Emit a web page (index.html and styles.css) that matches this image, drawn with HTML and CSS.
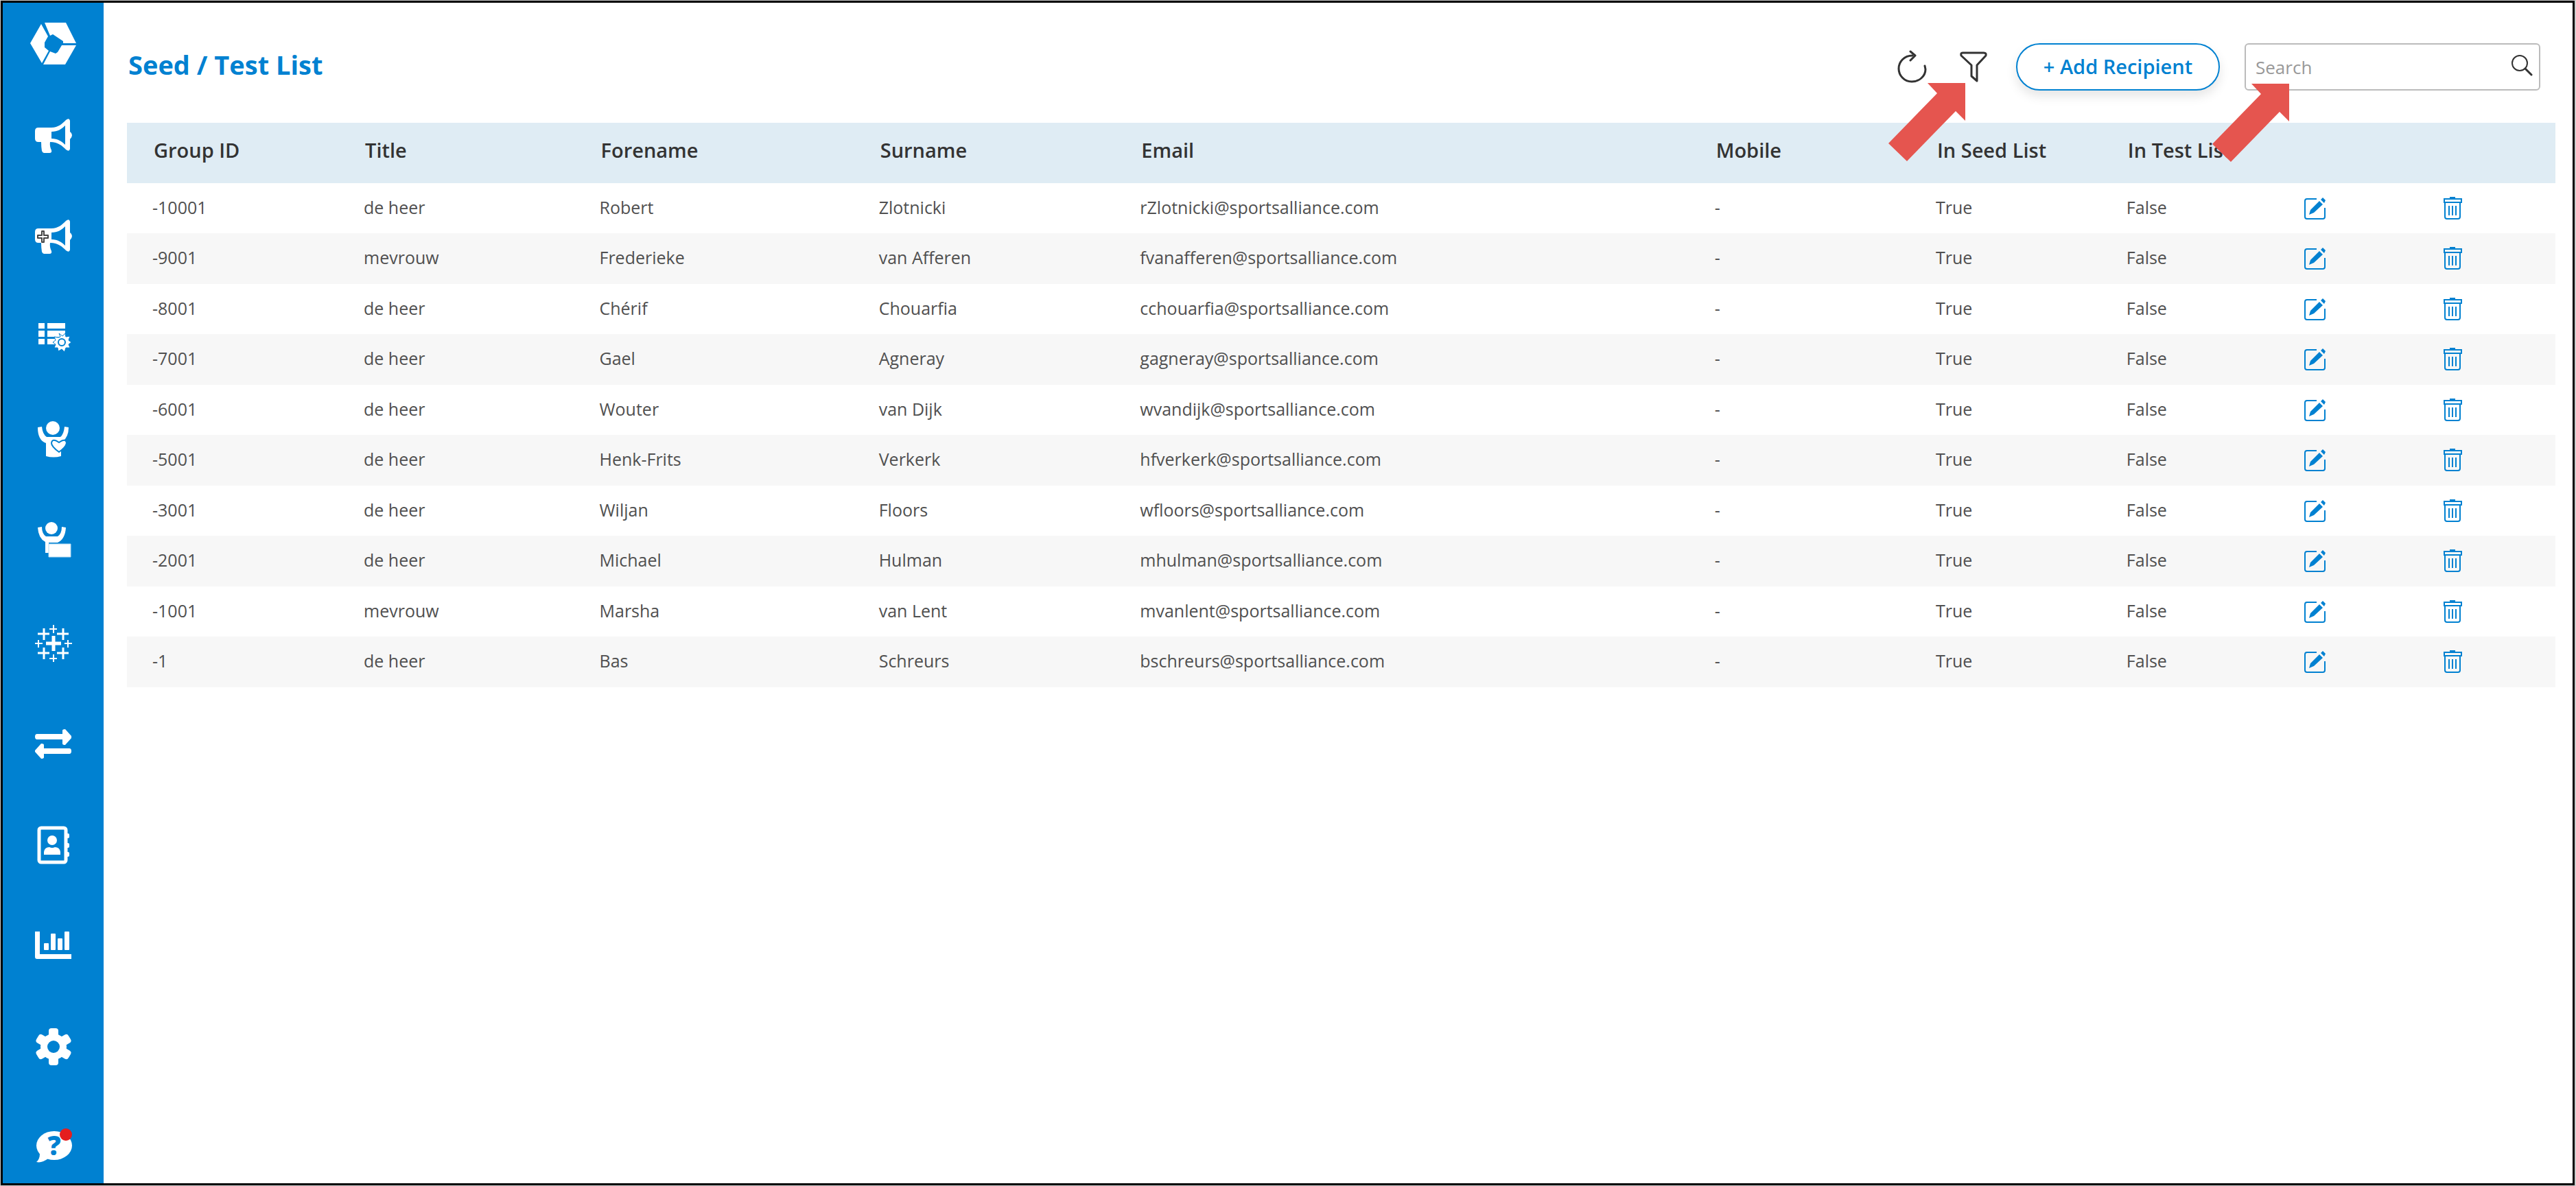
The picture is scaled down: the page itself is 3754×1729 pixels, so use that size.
FILE: index.html
```html
<!DOCTYPE html>
<html lang="en">
  <head>
    <meta charset="UTF-8" />
    <meta name="viewport" content="width=device-width, initial-scale=1.0" />
    <link rel="stylesheet" href="styles.css">
    <title>Seed / Test List</title>
  </head>
  <body>
    <!-- shared icons -->
    <svg class="sprite" aria-hidden="true">
      <symbol id="megaphone" viewBox="0 0 64 64">
        <path fill-rule="evenodd" d="M10 20H29C39 20 45 14 50 9Q55 5 56 10V26Q59 28 59 31T56 37V51Q55 56 50 52C45 47 39 41 27 41Q26 47 29 53Q30 57 26 57H18Q16 57 15 54Q14 48 14 41H10Q5 41 5 36V25Q5 20 10 20ZM29 26V36C38 36 44 40 49 45V17C44 22 38 26 29 26Z" />
      </symbol>
      <symbol id="edit" viewBox="0 0 34 34">
        <path d="M19 3H5Q2 3 2 6V29Q2 32 5 32H28Q31 32 31 29V16" fill="none" stroke="currentColor" stroke-width="2" />
        <path d="M8 26L10 19L23 6L28 11L15 23ZM25 4L28 1L32 5L30 9Z" />
      </symbol>
      <symbol id="trash" viewBox="0 0 34 34">
        <path d="M3 3H28V8H3ZM4 8V29Q4 32 7 32H23Q26 32 26 29V8" fill="none" stroke="currentColor" stroke-width="2" />
        <path d="M10 13V27M15 13V27M20 13V27" stroke="currentColor" stroke-width="2" />
        <path d="M11 0H19V3H11Z" />
      </symbol>
    </svg>

    <div class="app">
      <aside class="sidebar">
        <a class="logo" href="#" aria-label="Home">
          <svg viewBox="0 0 72 72">
            <path d="M23 5H54L69 35H50V32L35 22L31 24Z" />
            <path d="M18 7L28 25L23 34V41L29 46L19 64L2 35Z" />
            <path d="M69 38L53 66H21L31 47L39 50L42 48L48 38Z" />
          </svg>
        </a>
        <nav class="menu">
          <a href="#" aria-label="Campaigns"><svg viewBox="0 0 64 64"><use href="#megaphone" /></svg></a>
          <a href="#" aria-label="New campaign">
            <svg viewBox="0 0 64 64">
              <use href="#megaphone" />
              <path d="M15 24H18V30H24V34H18V40H15V34H9V30H15Z" fill="#fff" stroke="#444" stroke-width="2" stroke-linejoin="round" />
            </svg>
          </a>
          <a href="#" aria-label="Lists">
            <svg viewBox="0 0 64 64">
              <path d="M10 11H19V19H10ZM10 22H19V31H10ZM10 34H19V42H10ZM23 11H49V19H23ZM23 22H49V31H23ZM23 34H42V42H23Z" />
              <g stroke="#0081d1" stroke-width="1">
                <path d="M42 31L40 26L45 30L49 26L50 31L56 30L54 36L58 39L54 42L56 47L50 47L48 53L44 49L39 52L38 47L33 47L35 42L31 39L35 36L33 31L39 32Z" />
                <circle cx="44" cy="39" r="5" fill="none" stroke-width="2" />
              </g>
            </svg>
          </a>
          <a href="#" aria-label="Fans">
            <svg viewBox="0 0 64 64">
              <circle cx="31" cy="17" r="10" />
              <path d="M9 16L15 15Q16 26 22 30H42Q47 26 48 15L54 16Q54 30 45 37L43 38V58Q32 61 21 58V39Q9 35 9 16Z" />
              <path d="M40 52Q29 44 29 39Q30 31 40 38Q50 31 51 39Q50 45 40 52Z" stroke="#0081d1" stroke-width="2" />
            </svg>
          </a>
          <a href="#" aria-label="Presentations">
            <svg viewBox="0 0 64 64">
              <circle cx="29" cy="16" r="9" />
              <path d="M9 15L15 14Q15 24 21 28H38Q44 24 44 14L50 15Q49 32 38 37H25V52H20V36Q10 31 9 15Z" />
              <path d="M25 39H57V58H25Z" stroke="#b5dbf3" stroke-width="1" />
            </svg>
          </a>
          <a href="#" aria-label="Analytics">
            <svg viewBox="0 0 64 64" fill="none" stroke="currentColor">
              <path d="M32 26V48M21 37H43" stroke-width="5" />
              <path d="M18 15V32M9 23H26M46 15V32M37 23H54M18 43V60M9 51H26M46 43V60M37 51H54" stroke-width="3" />
              <path d="M32 10V22M26 16H37M32 53V64M26 59H37M10 32V43M5 37H16M53 32V43M48 37H59" stroke-width="2" />
            </svg>
          </a>
          <a href="#" aria-label="Transfers">
            <svg viewBox="0 0 64 64">
              <path d="M8 22H45V17Q45 15 49 15L58 25V28L49 38Q45 38 45 36V30H8Q5 30 5 26T8 22Z" />
              <path d="M55 43H18V38Q18 36 14 36L5 46V48L14 58Q18 58 18 56V51H55Q58 51 58 47T55 43Z" />
            </svg>
          </a>
          <a href="#" aria-label="Contacts">
            <svg viewBox="0 0 64 64">
              <rect x="11" y="12" width="39" height="50" rx="3" fill="none" stroke="#fff" stroke-width="5" />
              <circle cx="30" cy="30" r="7" />
              <path d="M18 51V47Q19 40 26 40Q30 42 34 40Q41 40 42 47V51Z" />
              <rect x="50" y="20" width="5" height="7" rx="2" /><rect x="50" y="34" width="5" height="7" rx="2" /><rect x="50" y="47" width="5" height="7" rx="2" />
            </svg>
          </a>
          <a href="#" aria-label="Reports">
            <svg viewBox="0 0 64 64">
              <path d="M5 16H12V49H58V56H8Q5 56 5 53Z" />
              <rect x="18" y="33" width="7" height="10" rx="1" /><rect x="28" y="19" width="7" height="24" rx="1" />
              <rect x="38" y="26" width="7" height="17" rx="1" /><rect x="48" y="16" width="7" height="27" rx="1" />
            </svg>
          </a>
          <a href="#" aria-label="Settings">
            <svg viewBox="0 0 64 64">
              <circle cx="32" cy="37" r="19" />
              <rect x="25" y="10" width="14" height="54" rx="4" />
              <rect x="25" y="10" width="14" height="54" rx="4" transform="rotate(60 32 37)" />
              <rect x="25" y="10" width="14" height="54" rx="4" transform="rotate(120 32 37)" />
              <circle cx="32" cy="37" r="9" fill="#0081d1" />
            </svg>
          </a>
          <a href="#" aria-label="Help">
            <svg viewBox="0 0 64 64">
              <ellipse cx="33" cy="34" rx="26" ry="21" />
              <path d="M12 46Q12 54 7 58Q15 60 24 53Z" />
              <text x="33" y="48" class="help-mark">?</text>
              <circle cx="50" cy="18" r="9" fill="#e41e1e" />
            </svg>
          </a>
        </nav>
      </aside>

      <main class="content">
        <header class="toolbar">
          <h1 class="page-title">Seed / Test List</h1>
          <button class="icon-btn" aria-label="Refresh">
            <svg viewBox="0 0 48 48" class="lines">
              <path d="M26 8C14 8 6 17 6 27S14 46 25 46S45 38 45 28L44 23" stroke-width="3" />
              <path d="M23 2L30 8L23 15" stroke-width="3" />
            </svg>
          </button>
          <div class="callout">
            <button class="icon-btn" aria-label="Filter">
              <svg viewBox="0 0 48 48" class="lines">
                <path d="M8 4H39Q43 4 42 8L29 22V45L21 38V22L6 8Q5 4 8 4Z" stroke-width="3" />
              </svg>
            </button>
            <svg class="arrow arrow-filter" viewBox="0 0 112 114"><path d="M57 0H112V55L98 41L27 114L0 88L71 15Z" /></svg>
          </div>
          <button class="add-btn">+ Add Recipient</button>
          <div class="callout search">
            <input class="search-input" type="text" placeholder="Search" aria-label="Search">
            <svg class="search-icon lines" viewBox="0 0 32 32">
              <circle cx="13" cy="13" r="11" stroke-width="2" />
              <path d="M21 21L30 30" stroke-width="3" />
            </svg>
            <svg class="arrow arrow-search" viewBox="0 0 112 114"><path d="M57 0H112V55L98 41L27 114L0 88L71 15Z" /></svg>
          </div>
        </header>

        <table class="recipients">
          <thead>
            <tr>
              <th class="col-group">Group ID</th>
              <th class="col-title">Title</th>
              <th class="col-forename">Forename</th>
              <th class="col-surname">Surname</th>
              <th class="col-email">Email</th>
              <th class="col-mobile">Mobile</th>
              <th class="col-seed">In Seed List</th>
              <th class="col-test">In Test List</th>
              <th class="col-action"></th>
              <th class="col-action"></th>
            </tr>
          </thead>
          <tbody></tbody>
        </table>
      </main>
    </div>

    <script>
      const recipients = [
        ["-10001", "de heer", "Robert", "Zlotnicki", "rZlotnicki@sportsalliance.com"],
        ["-9001", "mevrouw", "Frederieke", "van Afferen", "fvanafferen@sportsalliance.com"],
        ["-8001", "de heer", "Chérif", "Chouarfia", "cchouarfia@sportsalliance.com"],
        ["-7001", "de heer", "Gael", "Agneray", "gagneray@sportsalliance.com"],
        ["-6001", "de heer", "Wouter", "van Dijk", "wvandijk@sportsalliance.com"],
        ["-5001", "de heer", "Henk-Frits", "Verkerk", "hfverkerk@sportsalliance.com"],
        ["-3001", "de heer", "Wiljan", "Floors", "wfloors@sportsalliance.com"],
        ["-2001", "de heer", "Michael", "Hulman", "mhulman@sportsalliance.com"],
        ["-1001", "mevrouw", "Marsha", "van Lent", "mvanlent@sportsalliance.com"],
        ["-1", "de heer", "Bas", "Schreurs", "bschreurs@sportsalliance.com"],
      ];

      function actionCell(icon, label) {
        return `<td><button class="row-btn" aria-label="${label}"><svg viewBox="0 0 34 34"><use href="#${icon}" /></svg></button></td>`;
      }

      // mobile, seed and test are the same for every recipient
      document.querySelector(".recipients tbody").innerHTML = recipients
        .map((row) => {
          const cells = [...row, "-", "True", "False"].map((text) => `<td>${text}</td>`).join("");
          return `<tr>${cells}${actionCell("edit", "Edit")}${actionCell("trash", "Delete")}</tr>`;
        })
        .join("");
    </script>
  </body>
</html>
```

FILE: styles.css
```css
* {
    box-sizing: border-box;
}

body {
    margin: 0;
    padding: 1px 2px 1px 1px;
    background-color: #ccc;
    font-family: "Open Sans", "Noto Sans", sans-serif;
    color: #333;
}

button,
input {
    font-family: inherit;
}

svg {
    display: block;
}

svg:not([fill]) {
    fill: currentColor;
}

.sprite {
    position: absolute;
    width: 0;
    height: 0;
}

svg.lines {
    fill: none;
    stroke: currentColor;
    stroke-linecap: round;
    stroke-linejoin: round;
}

.app {
    display: flex;
    min-height: calc(100vh - 2px);
    border: 3px solid #000;
    background-color: #fff;
}

/* sidebar */
.sidebar {
    flex: none;
    width: 147px;
    padding-top: 24px;
    background-color: #0081d1;
}

.sidebar a {
    display: block;
    color: #fff;
}

.logo svg {
    width: 72px;
    height: 72px;
    margin-left: 38px;
}

.menu {
    display: flex;
    flex-direction: column;
    gap: 83px;
    padding: 66px 0 0 42px;
}

.menu svg {
    width: 64px;
    height: 64px;
    overflow: visible;
}

.help-mark {
    fill: #0081d1;
    font-size: 38px;
    font-weight: 800;
    text-anchor: middle;
}

/* toolbar */
.content {
    flex: 1;
    min-width: 0;
    padding: 58px 25px 0 34px;
}

.toolbar {
    display: flex;
    align-items: center;
    height: 70px;
    margin-bottom: 47px;
    padding-right: 22px;
}

.page-title {
    flex: 1;
    margin: 0;
    padding: 0 0 6px 2px;
    color: #0081d1;
    font-size: 38px;
    font-weight: 700;
}

.icon-btn {
    display: block;
    padding: 0;
    border: 0;
    background: none;
    color: #333;
    cursor: pointer;
}

.icon-btn svg {
    width: 48px;
    height: 48px;
}

.callout {
    position: relative;
    margin-left: 43px;
}

.arrow {
    position: absolute;
    width: 112px;
    height: 114px;
    color: #e5554f;
    pointer-events: none;
}

.arrow-filter {
    top: 48px;
    right: 36px;
}

.arrow-search {
    top: 59px;
    left: -47px;
}

.add-btn {
    width: 297px;
    height: 69px;
    margin-left: 38px;
    padding: 0 0 2px;
    border: 2px solid #0081d1;
    border-radius: 35px;
    background-color: #fff;
    box-shadow: 0 8px 16px rgba(0, 0, 0, 0.1);
    color: #0081d1;
    font-size: 29px;
    font-weight: 600;
    cursor: pointer;
}

.search {
    width: 431px;
    margin-left: 36px;
}

.search-input {
    display: block;
    width: 100%;
    height: 69px;
    padding: 2px 60px 0 14px;
    border: 2px solid #bbb;
    border-radius: 6px;
    font-size: 26px;
}

.search-input::placeholder {
    color: #999;
}

.search-icon {
    position: absolute;
    top: 16px;
    right: 11px;
    width: 32px;
    height: 32px;
}

/* table */
.recipients {
    width: 100%;
    border-collapse: collapse;
    table-layout: fixed;
}

.recipients th {
    height: 88px;
    padding: 0 0 10px 39px;
    background-color: #dfecf4;
    font-size: 29px;
    font-weight: 600;
    text-align: left;
    white-space: nowrap;
}

.recipients td {
    height: 73px;
    padding: 0 0 4px 37px;
    color: #505050;
    font-size: 25px;
    white-space: nowrap;
}

.recipients tr:nth-child(even) td {
    height: 74px;
    background-color: #f7f7f7;
}

.col-group { width: 8.7%; }
.col-title { width: 9.7%; }
.col-forename { width: 11.5%; }
.col-surname { width: 10.75%; }
.col-email { width: 23.65%; }
.col-mobile { width: 9.1%; }
.col-seed { width: 7.85%; }
.col-test { width: 7.3%; }
.col-action { width: 5.7%; }

.row-btn {
    display: block;
    margin-top: 4px;
    padding: 0;
    border: 0;
    background: none;
    color: #0081d1;
    cursor: pointer;
}

.row-btn svg {
    width: 34px;
    height: 34px;
}
```
